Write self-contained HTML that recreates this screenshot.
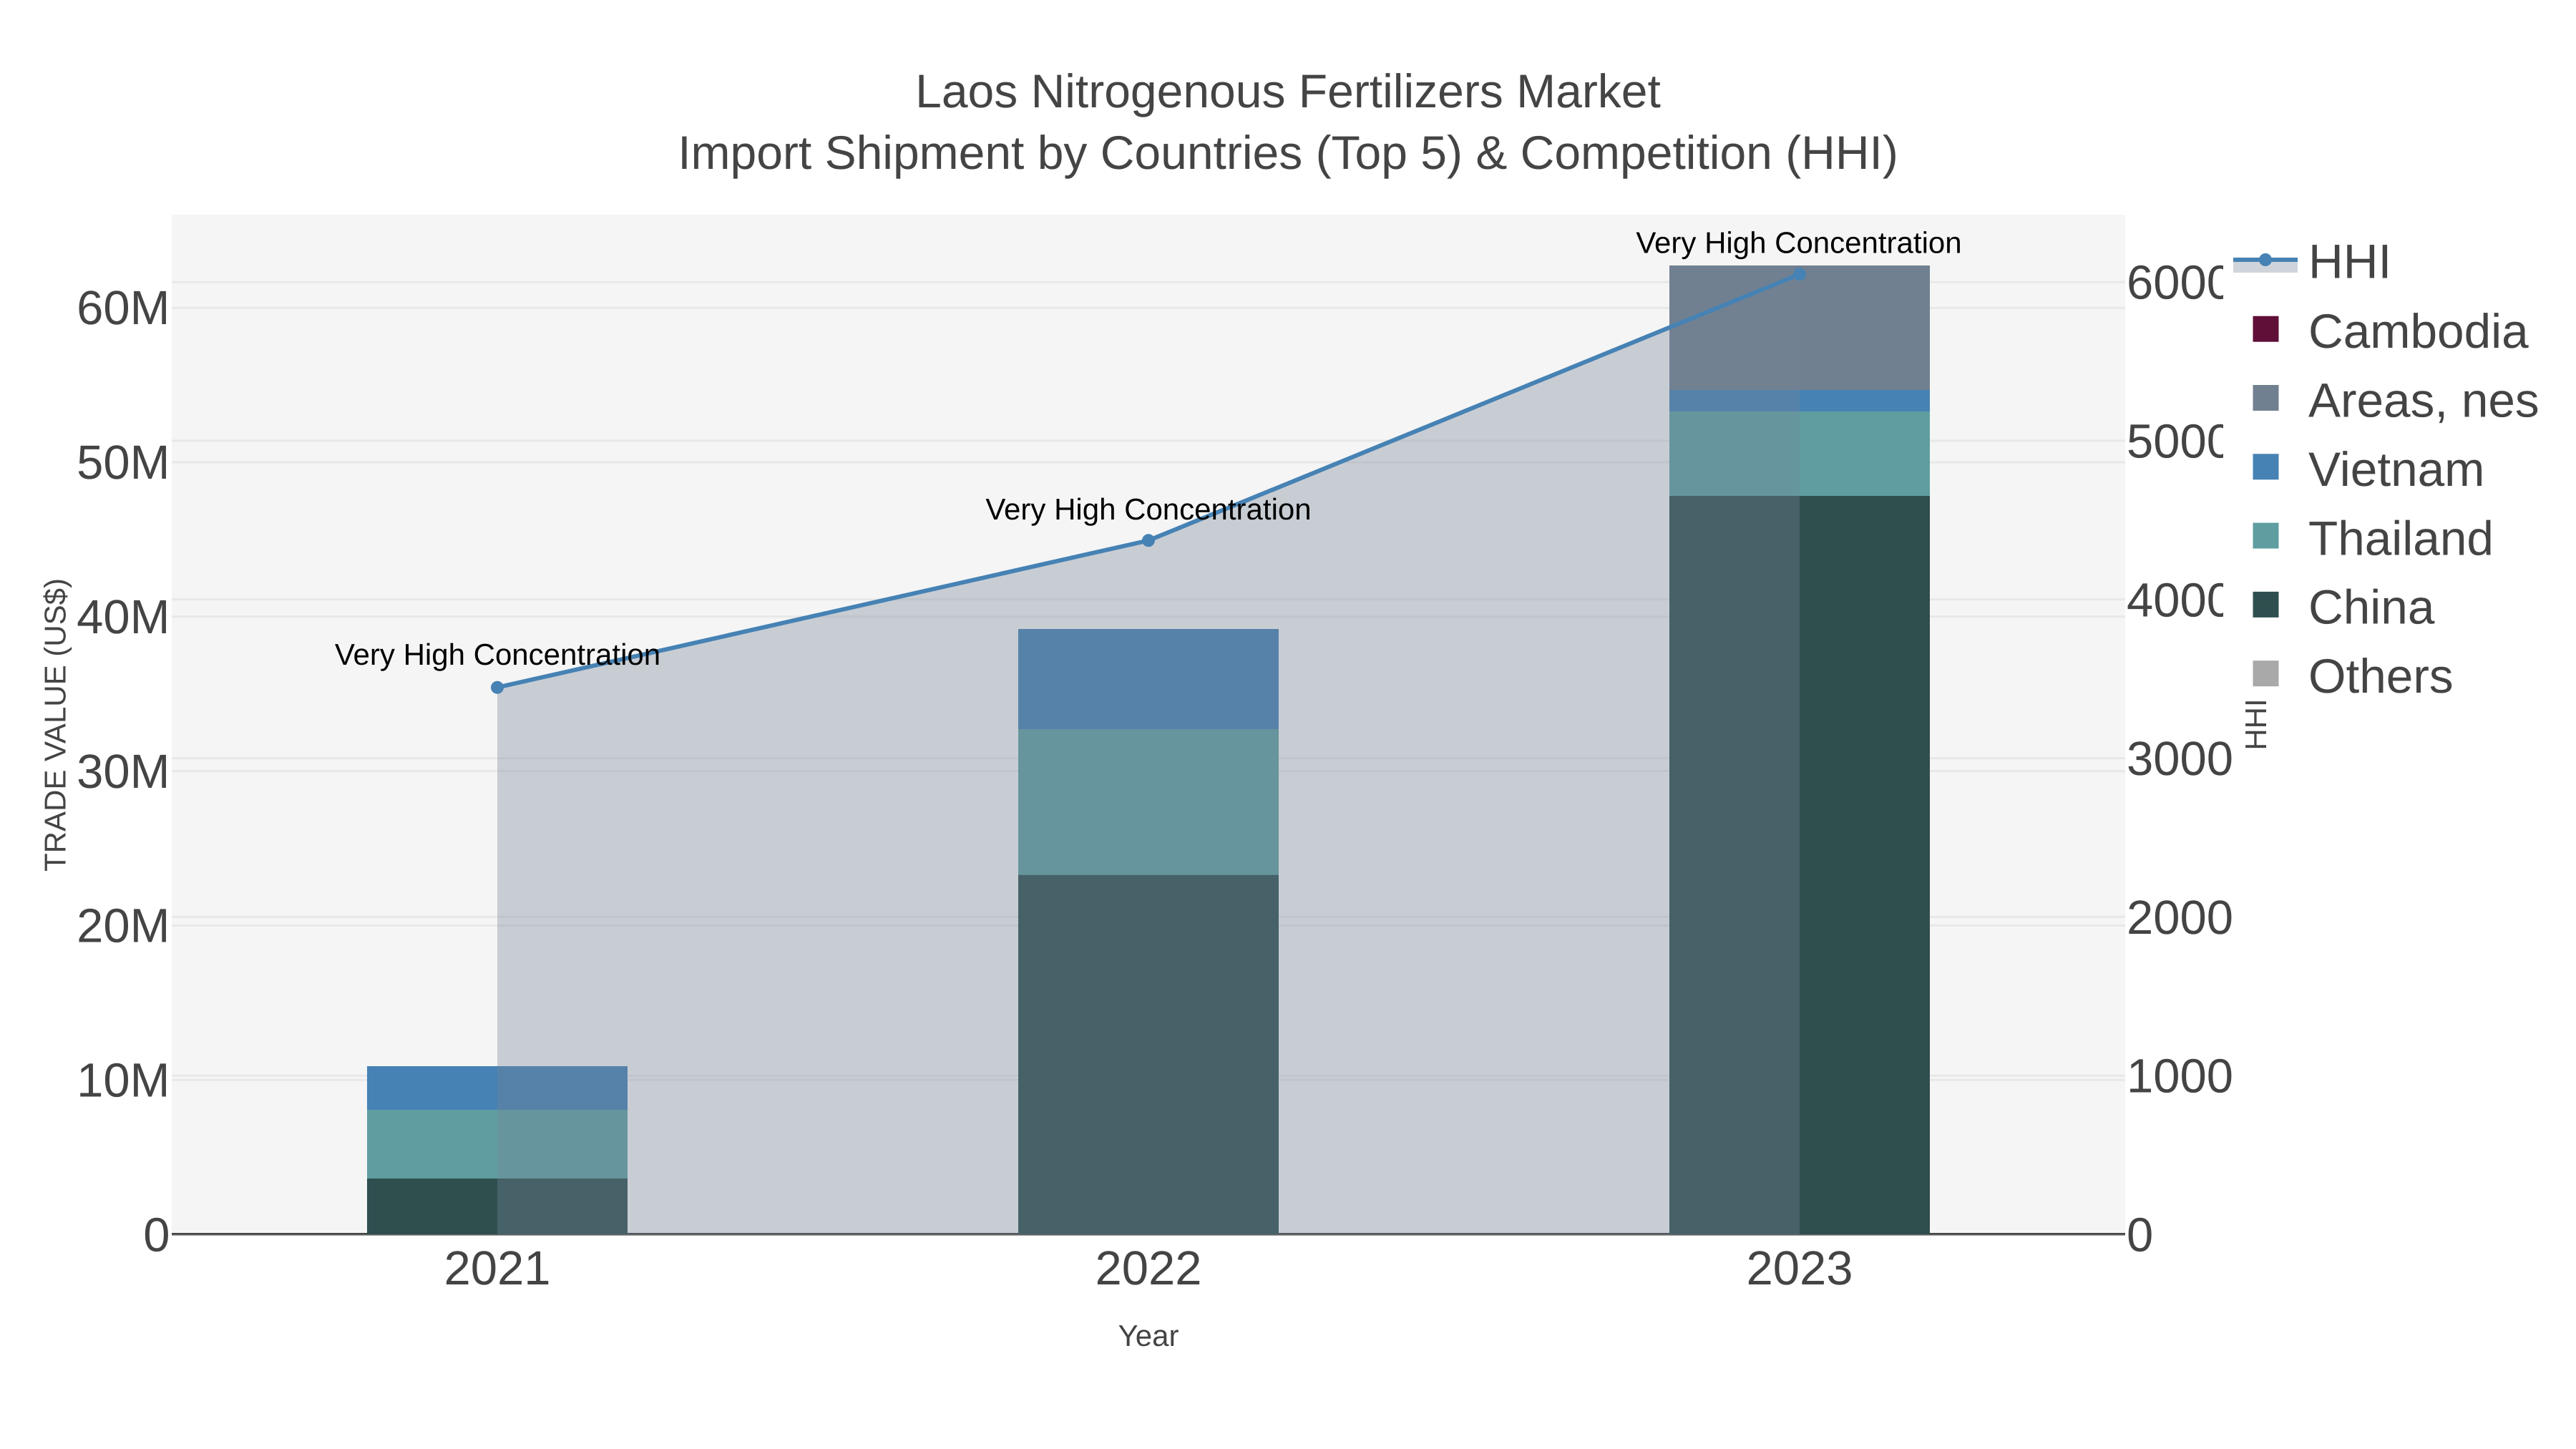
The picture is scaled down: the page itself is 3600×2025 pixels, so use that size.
<!DOCTYPE html>
<html lang="en">
<head>
<meta charset="utf-8">
<title>Laos Nitrogenous Fertilizers Market</title>
<style>
html,body{margin:0;padding:0;background:#fff;width:3600px;height:2025px;overflow:hidden}
svg{display:block}
text{font-family:"Liberation Sans",Arial,sans-serif;text-rendering:geometricPrecision}
.h{font-size:66px;fill:#444}
.t{font-size:67px;fill:#444}
.l{font-size:67.5px;fill:#444}
.a{font-size:42px;fill:#444}
.n{font-size:42px;fill:#000;text-anchor:middle}
</style>
</head>
<body>
<svg width="3600" height="2025" viewBox="0 0 3600 2025" xmlns="http://www.w3.org/2000/svg">
<rect width="3600" height="2025" fill="#fff"/>
<rect x="240" y="300" width="2730" height="1425" fill="#f5f5f5"/>

<!-- gridlines -->
<g stroke="#e8e8e8" stroke-width="3" fill="none">
<path d="M240 1509.2H2970M240 1293.4H2970M240 1077.6H2970M240 861.8H2970M240 646H2970M240 430.2H2970"/>
<path d="M240 1503.2H2970M240 1281.4H2970M240 1059.6H2970M240 837.8H2970M240 616H2970M240 394.2H2970"/>
</g>
<rect x="240" y="1723" width="2730" height="2.5" fill="#444"/>

<!-- bars -->
<g>
<rect x="513" y="1647" width="364" height="78" fill="#2f4f4f"/>
<rect x="513" y="1551" width="364" height="96" fill="#5f9ea0"/>
<rect x="513" y="1490" width="364" height="61" fill="#4682b4"/>

<rect x="1423" y="1222.6" width="364" height="502.4" fill="#2f4f4f"/>
<rect x="1423" y="1019" width="364" height="203.6" fill="#5f9ea0"/>
<rect x="1423" y="879" width="364" height="140" fill="#4682b4"/>

<rect x="2333" y="693" width="364" height="1032" fill="#2f4f4f"/>
<rect x="2333" y="575" width="364" height="118" fill="#5f9ea0"/>
<rect x="2333" y="545" width="364" height="30" fill="#4682b4"/>
<rect x="2333" y="371" width="364" height="174" fill="#708090"/>
</g>

<!-- area fill -->
<path d="M695 1725V960.7L1605 755.3L2515 383.3V1725Z" fill="rgb(118,133,152)" fill-opacity="0.35"/>
<rect x="240" y="1725" width="2730" height="1.6" fill="#666"/>

<!-- line -->
<path d="M695 960.7L1605 755.3L2515 383.3" fill="none" stroke="#4682b4" stroke-width="6"/>
<circle cx="695" cy="960.7" r="9" fill="#4682b4"/>
<circle cx="1605" cy="755.3" r="9" fill="#4682b4"/>
<circle cx="2515" cy="383.3" r="9" fill="#4682b4"/>

<!-- annotations -->
<text class="n" x="695.5" y="929">Very High Concentration</text>
<text class="n" x="1605" y="726">Very High Concentration</text>
<text class="n" x="2514" y="353.5">Very High Concentration</text>

<!-- title -->
<text class="h" x="1800" y="150" text-anchor="middle">Laos Nitrogenous Fertilizers Market</text>
<text class="h" x="1800" y="236" text-anchor="middle">Import Shipment by Countries (Top 5) &amp; Competition (HHI)</text>

<!-- left ticks -->
<g text-anchor="end">
<text class="t" x="237.5" y="1748.5">0</text>
<text class="t" x="237.5" y="1532.6">10M</text>
<text class="t" x="237.5" y="1316.7">20M</text>
<text class="t" x="237.5" y="1100.8">30M</text>
<text class="t" x="237.5" y="884.9">40M</text>
<text class="t" x="237.5" y="669">50M</text>
<text class="t" x="237.5" y="453.1">60M</text>
</g>

<!-- right ticks -->
<g>
<text class="t" x="2972" y="1748.5">0</text>
<text class="t" x="2972" y="1526.7">1000</text>
<text class="t" x="2972" y="1304.9">2000</text>
<text class="t" x="2972" y="1083.1">3000</text>
<text class="t" x="2972" y="861.3">4000</text>
<text class="t" x="2972" y="639.5">5000</text>
<text class="t" x="2972" y="417.7">6000</text>
</g>

<!-- x ticks -->
<text class="t" x="695" y="1795" text-anchor="middle">2021</text>
<text class="t" x="1605" y="1795" text-anchor="middle">2022</text>
<text class="t" x="2515" y="1795" text-anchor="middle">2023</text>

<!-- axis titles -->
<text class="a" x="1605" y="1881" text-anchor="middle">Year</text>
<text class="a" transform="translate(91.5 1013) rotate(-90)" text-anchor="middle">TRADE VALUE (US$)</text>

<!-- legend -->
<rect x="3107" y="330" width="493" height="670" fill="#fff"/>
<rect x="3121" y="363" width="90" height="18" fill="rgb(118,133,152)" fill-opacity="0.35"/>
<rect x="3121" y="360" width="90" height="6" fill="#4682b4"/>
<circle cx="3166" cy="363" r="9" fill="#4682b4"/>
<rect x="3148.5" y="441.7" width="36" height="36" fill="#5f0f38"/>
<rect x="3148.5" y="538" width="36" height="36" fill="#708090"/>
<rect x="3148.5" y="634.3" width="36" height="36" fill="#4682b4"/>
<rect x="3148.5" y="730.6" width="36" height="36" fill="#5f9ea0"/>
<rect x="3148.5" y="826.9" width="36" height="36" fill="#2f4f4f"/>
<rect x="3148.5" y="923.2" width="36" height="36" fill="#a9a9a9"/>
<text class="l" x="3226" y="388.5">HHI</text>
<text class="l" x="3226" y="486">Cambodia</text>
<text class="l" x="3226" y="582.5">Areas, nes</text>
<text class="l" x="3226" y="679">Vietnam</text>
<text class="l" x="3226" y="775.5">Thailand</text>
<text class="l" x="3226" y="871.5">China</text>
<text class="l" x="3226" y="968">Others</text>

<text class="a" transform="translate(3167 1012.5) rotate(-90)" text-anchor="middle">HHI</text>
</svg>
</body>
</html>
